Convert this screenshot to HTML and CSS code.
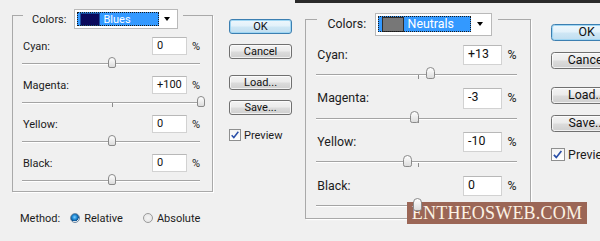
FILE: index.html
```html
<!DOCTYPE html>
<html lang="en">
<head>
<meta charset="utf-8">
<title>Selective Color</title>
<link rel="stylesheet" href="styles.css">
</head>
<body>
<div class="page">
  <section class="panel panel-left">
    <div class="dlg">
      <div class="dlg-main">
        <fieldset class="group">
          <legend class="group-legend">
            <div class="group-head">
              <span class="head-label">Colors:</span>
              <div class="select">
                <div class="select-value"><span class="swatch swatch-blue"></span><span>Blues</span></div>
                <div class="select-arrow"><span class="tri"></span></div>
              </div>
            </div>
          </legend>
          <div class="rows">
            <div class="row">
              <div class="row-top"><span class="row-label">Cyan:</span><span class="num">0</span><span class="pct">%</span></div>
              <div class="slider"><span class="thumb" style="--v:0"></span></div>
            </div>
            <div class="row">
              <div class="row-top"><span class="row-label">Magenta:</span><span class="num">+100</span><span class="pct">%</span></div>
              <div class="slider"><span class="thumb" style="--v:100"></span></div>
            </div>
            <div class="row">
              <div class="row-top"><span class="row-label">Yellow:</span><span class="num">0</span><span class="pct">%</span></div>
              <div class="slider"><span class="thumb" style="--v:0"></span></div>
            </div>
            <div class="row">
              <div class="row-top"><span class="row-label">Black:</span><span class="num">0</span><span class="pct">%</span></div>
              <div class="slider"><span class="thumb" style="--v:0"></span></div>
            </div>
          </div>
        </fieldset>
        <div class="buttons">
          <div class="btn btn-default">OK</div>
          <div class="btn btn-cancel">Cancel</div>
          <div class="btn btn-load">Load...</div>
          <div class="btn btn-save">Save...</div>
          <div class="check-row"><span class="checkbox"><svg viewBox="0 0 12 12" width="10" height="10"><path d="M2 6.2 L4.6 9 L10 2.2" fill="none" stroke="#2a4fa8" stroke-width="1.8"/></svg></span><span>Preview</span></div>
        </div>
      </div>
      <div class="method">
        <span class="method-label">Method:</span>
        <span class="radio radio-on"></span><span class="radio-text">Relative</span>
        <span class="radio"></span><span class="radio-text">Absolute</span>
      </div>
    </div>
  </section>

  <section class="panel panel-right">
    <div class="dlg dlg-zoomed">
      <div class="dlg-main">
        <fieldset class="group">
          <legend class="group-legend">
            <div class="group-head">
              <span class="head-label">Colors:</span>
              <div class="select">
                <div class="select-value"><span class="swatch swatch-gray"></span><span>Neutrals</span></div>
                <div class="select-arrow"><span class="tri"></span></div>
              </div>
            </div>
          </legend>
          <div class="rows">
            <div class="row">
              <div class="row-top"><span class="row-label">Cyan:</span><span class="num">+13</span><span class="pct">%</span></div>
              <div class="slider"><span class="thumb" style="--v:13"></span></div>
            </div>
            <div class="row">
              <div class="row-top"><span class="row-label">Magenta:</span><span class="num">-3</span><span class="pct">%</span></div>
              <div class="slider"><span class="thumb" style="--v:-3"></span></div>
            </div>
            <div class="row">
              <div class="row-top"><span class="row-label">Yellow:</span><span class="num">-10</span><span class="pct">%</span></div>
              <div class="slider"><span class="thumb" style="--v:-10"></span></div>
            </div>
            <div class="row">
              <div class="row-top"><span class="row-label">Black:</span><span class="num">0</span><span class="pct">%</span></div>
              <div class="slider"><span class="thumb" style="--v:0"></span></div>
            </div>
          </div>
        </fieldset>
        <div class="buttons">
          <div class="btn btn-default">OK</div>
          <div class="btn btn-cancel">Cancel</div>
          <div class="btn btn-load">Load...</div>
          <div class="btn btn-save">Save...</div>
          <div class="check-row"><span class="checkbox"><svg viewBox="0 0 12 12" width="10" height="10"><path d="M2 6.2 L4.6 9 L10 2.2" fill="none" stroke="#2a4fa8" stroke-width="1.8"/></svg></span><span>Preview</span></div>
        </div>
      </div>
    </div>
  </section>

  <div class="watermark">ENTHEOSWEB.COM</div>
</div>
</body>
</html>
```

FILE: styles.css
```css
html, body {
  margin: 0;
  padding: 0;
  background: #f0f0f0;
}

.page {
  position: relative;
  width: 600px;
  height: 241px;
  overflow: hidden;
  display: flex;
  font-family: Roboto, "Liberation Sans", sans-serif;
  font-size: 11px;
  color: #1c1c1c;
  background: #f0f0f0;
}

.panel {
  height: 241px;
  overflow: hidden;
  box-sizing: border-box;
}

.panel-left {
  width: 295px;
  flex-shrink: 0;
}

.panel-right {
  flex: 1;
  min-width: 0;
  border-top: 3px solid #2a2a2a;
}

.dlg {
  width: max-content;
  display: flex;
  flex-direction: column;
}

.dlg-zoomed {
  zoom: 1.124;
}

.dlg-main {
  display: flex;
  align-items: flex-start;
}

/* group box */
.group {
  flex-shrink: 0;
  width: 201px;
  box-sizing: border-box;
  margin: 0 0 0 12px;
  padding: 7px 11px 4px 10px;
  border: 1px solid #a9a9a9;
  box-shadow: 1px 1px 0 #ffffff;
  min-width: 0;
}

.dlg-zoomed .group {
  margin-left: 9px;
}

.group-legend {
  padding: 9px 5px 1px 9px;
  margin: 0;
}

.group-head {
  display: flex;
  align-items: center;
}

.head-label {
  margin-right: 8px;
}

.select {
  display: flex;
  width: 104px;
  height: 20px;
  box-sizing: border-box;
  padding: 2px;
  border: 1px solid #b9b9b9;
  background: #ffffff;
}

.select-value {
  flex: 1;
  display: flex;
  align-items: center;
  padding-left: 3px;
  background: #3399ff;
  color: #ffffff;
  outline: 1px dotted #1a1a1a;
  outline-offset: -1px;
}

.swatch {
  width: 20px;
  height: 13px;
  box-sizing: border-box;
  margin-right: 3px;
}

.swatch-blue {
  background: #0a0a5c;
  border: 1px solid #1a4fa0;
}

.swatch-gray {
  background: #777777;
  border: 1px solid #2e2e2e;
}

.select-arrow {
  width: 16px;
  display: flex;
  align-items: center;
  justify-content: center;
}

.tri {
  width: 0;
  height: 0;
  border-left: 3.5px solid transparent;
  border-right: 3.5px solid transparent;
  border-top: 4px solid #000000;
}

/* rows */
.rows {
  display: flex;
  flex-direction: column;
  gap: 6px;
}

.row-top {
  display: flex;
  align-items: center;
  height: 18px;
}

.row-label {
  flex: 1;
}

.num {
  width: 35px;
  height: 18px;
  box-sizing: border-box;
  border: 1px solid #d2d2d2;
  border-top-color: #b8b8b8;
  background: #ffffff;
  padding-left: 4px;
  line-height: 16px;
  color: #111111;
}

.pct {
  width: 9px;
  margin-left: 5px;
}

.slider {
  position: relative;
  height: 15px;
}

.slider::before {
  content: "";
  position: absolute;
  left: -1px;
  right: 1px;
  top: 8px;
  border-top: 1px solid #a4a4a4;
  border-bottom: 1px solid #ffffff;
}

.slider::after {
  content: "";
  position: absolute;
  left: 50%;
  top: 9px;
  width: 1px;
  height: 4px;
  background: #8c8c8c;
}

.thumb {
  position: absolute;
  z-index: 1;
  top: 2px;
  left: calc(50% + var(--v) * 0.89px - 4px);
  width: 8px;
  height: 11px;
  box-sizing: border-box;
  border: 1px solid #8a8a8a;
  border-radius: 4px 4px 2px 2px;
  background: linear-gradient(#ffffff, #dcdcdc);
}

/* buttons */
.buttons {
  flex-shrink: 0;
  margin-left: 16px;
  padding-top: 19px;
  display: flex;
  flex-direction: column;
  width: 63px;
}

.dlg-zoomed .buttons {
  margin-left: 18px;
}

.btn {
  height: 15px;
  box-sizing: border-box;
  border: 1px solid #707070;
  border-radius: 3px;
  background: linear-gradient(#f3f3f3 0%, #ebebeb 48%, #dcdcdc 52%, #cfcfcf 100%);
  box-shadow: inset 0 0 0 1px rgba(255, 255, 255, 0.7);
  text-align: center;
  line-height: 13px;
  color: #111111;
}

.btn-default {
  border-color: #3c7fb1;
  background: linear-gradient(#eef7fc 0%, #e2f1fa 48%, #cfe7f5 52%, #c0def0 100%);
  box-shadow: inset 0 0 0 1px #9fd6f3;
  margin-bottom: 10px;
}

.btn-cancel {
  margin-bottom: 16px;
}

.btn-load {
  margin-bottom: 10px;
}

.btn-save {
  margin-bottom: 14px;
}

.check-row {
  display: flex;
  align-items: center;
  gap: 3px;
  height: 12px;
}

.checkbox {
  width: 12px;
  height: 12px;
  box-sizing: border-box;
  border: 1px solid #8e8f8f;
  background: linear-gradient(#f4f4f4, #ffffff);
  display: flex;
  align-items: center;
  justify-content: center;
}

/* method */
.method {
  display: flex;
  align-items: center;
  margin: 19px 0 0 20px;
  height: 14px;
}

.method-label {
  margin-right: 10px;
}

.radio {
  width: 10px;
  height: 10px;
  box-sizing: border-box;
  border-radius: 50%;
  border: 1px solid #9a9a9a;
  background: radial-gradient(circle at 50% 50%, #f4f4f4 0%, #e2e2e2 100%);
  margin-right: 4px;
}

.radio-on {
  background: radial-gradient(circle at 45% 40%, #7fd0ff 0%, #1f8ad6 35%, #0c4f8c 60%, #e8e8e8 66%, #f6f6f6 100%);
  border-color: #6d8aa5;
}

.radio-text {
  margin-right: 20px;
}

/* watermark overlay */
.watermark {
  position: absolute;
  left: 407px;
  top: 202px;
  width: 180px;
  height: 22px;
  background: #9b6656;
  color: #fbf2e4;
  font-family: "Liberation Serif", serif;
  font-size: 18px;
  line-height: 23px;
  text-align: center;
  letter-spacing: 0.2px;
}
```
